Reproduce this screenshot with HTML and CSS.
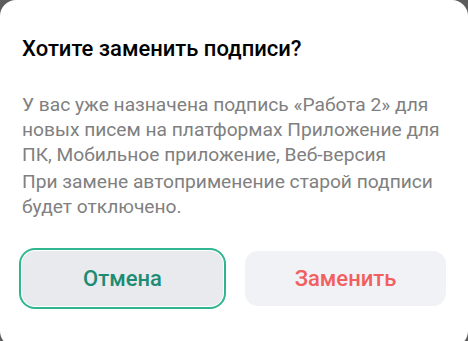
FILE: index.html
```html
<!DOCTYPE html>
<html lang="ru">
<head>
<meta charset="utf-8">
<link rel="stylesheet" href="styles.css">
</head>
<body>
<div class="dialog">
  <h1 class="title">Хотите заменить подписи?</h1>
  <p class="text">У вас уже назначена подпись «Работа 2» для новых писем на платформах Приложение для ПК, Мобильное приложение, Веб-версия</p>
  <p class="text">При замене автоприменение старой подписи будет отключено.</p>
  <div class="actions">
    <button class="btn btn-cancel">Отмена</button>
    <button class="btn btn-replace">Заменить</button>
  </div>
</div>
</body>
</html>
```
FILE: styles.css
```css
html, body {
  margin: 0;
  padding: 0;
  background: #5c5c5c;
  overflow: hidden;
}
.dialog {
  width: 468px;
  height: 347px;
  box-sizing: border-box;
  background: #fff;
  border-radius: 16px;
  padding: 37px 22px 0 22px;
  font-family: Roboto, "Noto Sans", sans-serif;
}
.title {
  margin: 0 0 31px 0;
  font-size: 22px;
  line-height: 24px;
  font-weight: 500;
  color: #000;
}
.text {
  margin: 0 0 2px 0;
  font-size: 19.2px;
  line-height: 25px;
  color: #808080;
}
.actions {
  display: flex;
  gap: 22px;
  margin-top: 32px;
}
.btn {
  flex: 1;
  height: 55px;
  border: none;
  border-radius: 13px;
  font-family: Roboto, "Noto Sans", sans-serif;
  font-size: 22px;
  font-weight: 500;
}
.btn-cancel {
  background: #e8eaee;
  color: #1e8b73;
  outline: 2px solid #2fb58f;
  outline-offset: 1px;
}
.btn-replace {
  background: #f1f2f6;
  color: #f15f5f;
}
```
